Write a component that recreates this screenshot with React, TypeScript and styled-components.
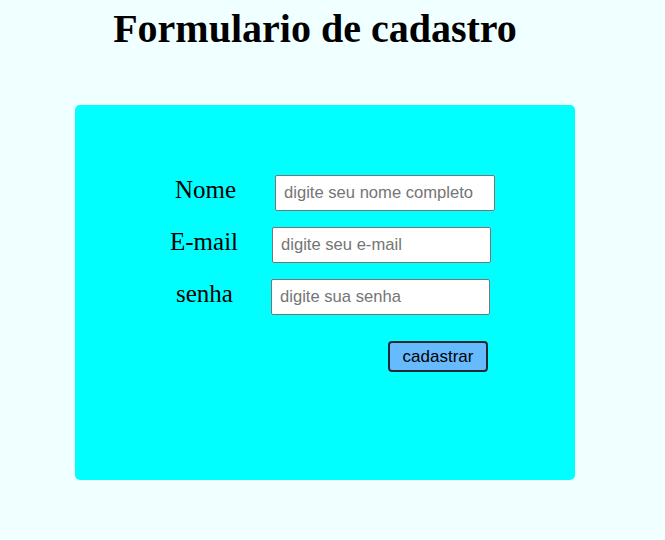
import React from "react";
import styled, { createGlobalStyle } from "styled-components";

const Global = createGlobalStyle`
  html, body { margin: 0; padding: 0; background: #f0ffff; }
  body { font-family: "Liberation Serif", "Times New Roman", serif; }
`;

const Page = styled.div`
  width: 665px;
  height: 540px;
  background: #f0ffff;
  overflow: hidden;
`;

const Title = styled.h1`
  margin: 0;
  padding-top: 6px;
  width: 630px;
  text-align: center;
  font-family: "Liberation Serif", "Times New Roman", serif;
  font-weight: bold;
  font-size: 40px;
  line-height: 46px;
  color: #000;
`;

const Card = styled.div`
  margin: 53px 0 0 75px;
  width: 500px;
  height: 375px;
  background: #00ffff;
  border-radius: 5px;
  box-sizing: border-box;
  padding-top: 70px;
  display: flex;
  flex-direction: column;
`;

const Rows = styled.div`
  display: flex;
  flex-direction: column;
  gap: 16px;
`;

const Row = styled.div`
  display: flex;
  align-items: center;
  height: 36px;
`;

const Label = styled.label<{ $left: number; $width: number }>`
  margin-left: ${(p) => p.$left}px;
  width: ${(p) => p.$width}px;
  font-family: "Liberation Serif", "Times New Roman", serif;
  font-size: 25px;
  color: #000;
  position: relative;
  top: -3px;
`;

const Input = styled.input<{ $width: number }>`
  width: ${(p) => p.$width}px;
  height: 36px;
  box-sizing: border-box;
  border: 1px solid #767676;
  border-radius: 2px;
  padding: 0 8px;
  font-family: "Liberation Sans", Arial, sans-serif;
  font-size: 16.6px;
  background: #fff;
  outline: none;
  &::placeholder { color: #757575; }
`;

const Button = styled.button`
  margin: 26px 0 0 313px;
  width: 100px;
  height: 31px;
  box-sizing: border-box;
  background: #66bbff;
  border: 2px solid #1f2a33;
  border-radius: 4px;
  font-family: "Liberation Sans", Arial, sans-serif;
  font-size: 17px;
  color: #000;
  padding: 0;
`;

export default function App() {
  return (
    <Page>
      <Global />
      <Title>Formulario de cadastro</Title>
      <Card>
        <Rows>
          <Row>
            <Label $left={100} $width={100}>Nome</Label>
            <Input $width={220} placeholder="digite seu nome completo" />
          </Row>
          <Row>
            <Label $left={95} $width={102}>E-mail</Label>
            <Input $width={219} placeholder="digite seu e-mail" />
          </Row>
          <Row>
            <Label $left={101} $width={95}>senha</Label>
            <Input $width={219} type="password" placeholder="digite sua senha" />
          </Row>
        </Rows>
        <Button>cadastrar</Button>
      </Card>
    </Page>
  );
}
